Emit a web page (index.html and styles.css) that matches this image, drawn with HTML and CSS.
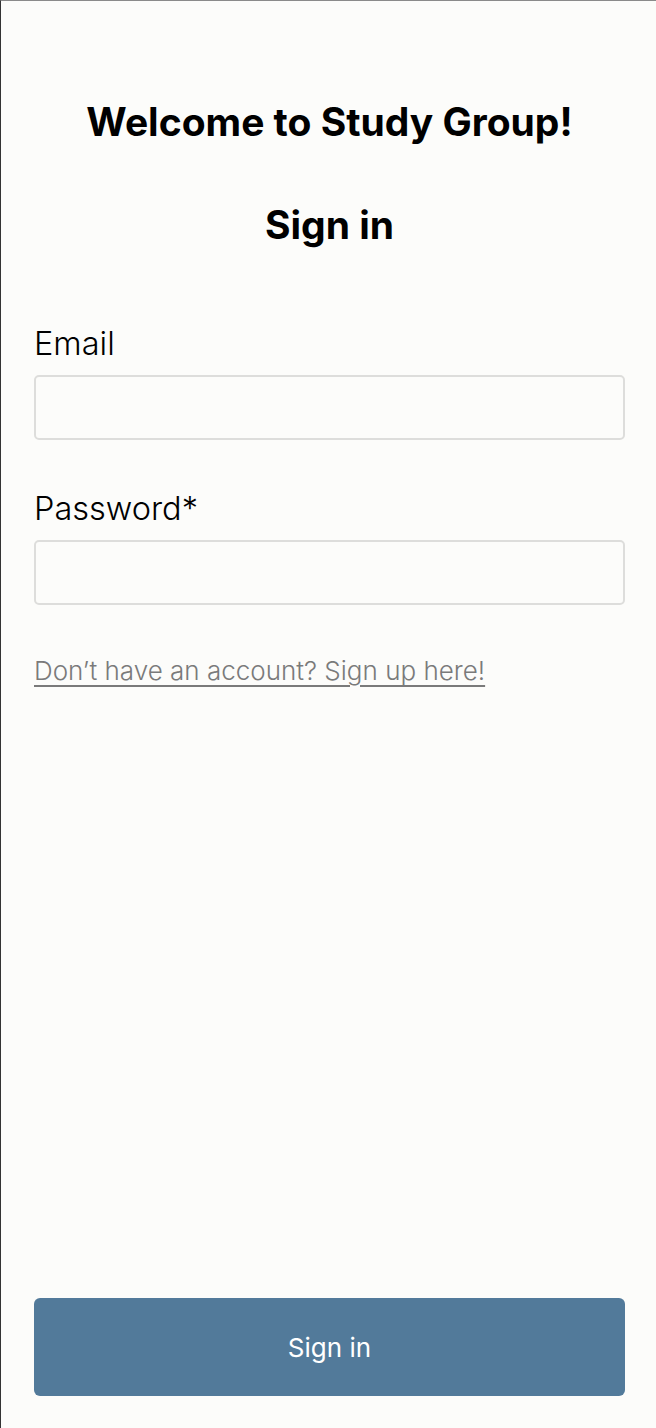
FILE: index.html
```html
<!DOCTYPE html>
<html lang="en">
<head>
<meta charset="utf-8">
<title>Sign in</title>
<link rel="stylesheet" href="styles.css">
</head>
<body>
<main class="page">
  <h1 class="title">Welcome to Study Group!</h1>
  <h2 class="subtitle">Sign in</h2>
  <form class="form">
    <label class="field">
      <span class="label">Email</span>
      <input class="input" type="email">
    </label>
    <label class="field field-second">
      <span class="label">Password*</span>
      <input class="input" type="password">
    </label>
    <a class="link" href="#">Don’t have an account? Sign up here!</a>
  </form>
  <button class="button" type="button">Sign in</button>
</main>
</body>
</html>
```

FILE: styles.css
```css
html, body {
  margin: 0;
  padding: 0;
  background: #fcfcfa;
}

.page {
  box-sizing: border-box;
  height: 1428px;
  border-top: 1px solid #8a8a8a;
  border-left: 1px solid #333333;
  padding: 0 31px 32px 33px;
  display: flex;
  flex-direction: column;
  font-family: Inter, "Noto Sans", sans-serif;
  color: #000;
}

.title {
  margin: 97px 0 0;
  font-size: 39px;
  line-height: 48px;
  font-weight: 700;
  text-align: center;
}

.subtitle {
  margin: 55px 0 0;
  font-size: 39px;
  line-height: 48px;
  font-weight: 700;
  text-align: center;
}

.form {
  display: flex;
  flex-direction: column;
  margin-top: 75px;
}

.field {
  display: flex;
  flex-direction: column;
  gap: 11px;
}

.field-second {
  margin-top: 49px;
}

.label {
  font-family: "Inter Light", Inter, "Noto Sans", sans-serif;
  font-size: 32.5px;
  line-height: 40px;
  font-weight: 300;
}

.input {
  box-sizing: border-box;
  height: 65px;
  width: 100%;
  margin: 0;
  border: 2px solid #dddddb;
  border-radius: 5px;
  background: #fcfcfa;
  font: inherit;
}

.link {
  align-self: flex-start;
  margin-top: 50px;
  font-family: "Inter Light", Inter, "Noto Sans", sans-serif;
  font-size: 26px;
  line-height: 32px;
  font-weight: 300;
  color: #7a7a7a;
  text-decoration: underline;
  text-decoration-thickness: 2px;
  text-underline-offset: 5px;
}

.button {
  margin-top: auto;
  height: 98px;
  width: 100%;
  border: none;
  border-radius: 6px;
  background: #527a9a;
  color: #ffffff;
  font-family: Inter, "Noto Sans", sans-serif;
  font-size: 26px;
  font-weight: 400;
}
```
